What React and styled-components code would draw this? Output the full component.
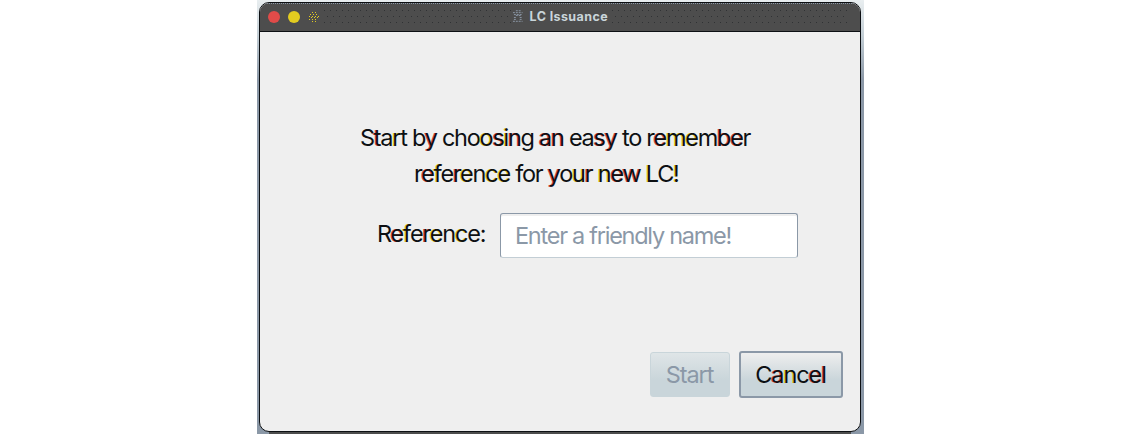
import React from "react";
import styled, { createGlobalStyle } from "styled-components";

const GlobalStyle = createGlobalStyle`
  * { box-sizing: border-box; }
  body {
    margin: 0;
    background: #fff;
    font-family: Inter, "Liberation Sans", sans-serif;
    overflow: hidden;
  }
`;

const Page = styled.main`
  display: flex;
  justify-content: center;
  height: 434px;
`;

const Desktop = styled.div`
  width: 607px;
  height: 434px;
  padding: 2px 3px 2px 2px;
  background: linear-gradient(#e9eef0 0, #c3ced5 36px, #8b98a7 80px, #8b98a7 100%);
`;

const Window = styled.section`
  display: flex;
  flex-direction: column;
  width: 602px;
  height: 430px;
  border: 1px solid #0d1013;
  border-radius: 10px;
  background: #efefef;
  box-shadow: 0 12px 0 -10px #4d4d4d;
  overflow: hidden;
`;

const TitleBar = styled.header`
  display: flex;
  align-items: center;
  height: 29px;
  padding: 0 7px 2px 8px;
  border-top: 1px dotted #8b98a7;
  border-bottom: 1px solid #0d1013;
  background: #4d4d4d;
`;

const Lights = styled.div`
  display: flex;
  gap: 8px;
  width: 56px;
`;

const Light = styled.span`
  width: 12px;
  height: 12px;
  border-radius: 50%;
  background: ${(p) => p.$fill};
`;

const Grain = styled.span`
  width: ${(p) => p.$width}px;
  height: 20px;
  background: conic-gradient(from 270deg at 1px 1px, #303234 90deg, transparent 0) 0 3px / 6px 12px,
    conic-gradient(from 270deg at 1px 1px, #303234 90deg, transparent 0) 3px 9px / 6px 12px;
`;

const Title = styled.h1`
  display: flex;
  align-items: center;
  gap: 6px;
  width: 96px;
  margin: 0 4px 0 0;
  padding-bottom: 1px;
  color: #c9d5da;
  font-size: 12.5px;
  font-weight: 700;
  line-height: 15px;
  letter-spacing: 0.4px;
  white-space: nowrap;
`;

const Content = styled.div`
  display: flex;
  flex: 1;
  flex-direction: column;
  padding: 88px 17px 34px 0;
`;

const Prompt = styled.p`
  display: flex;
  flex-direction: column;
  margin: 0;
  color: #0d1013;
  font-size: 23.5px;
  line-height: 36px;
  white-space: nowrap;
`;

const Line = styled.span`
  padding-left: ${(p) => p.$indent}px;
  letter-spacing: ${(p) => p.$spacing}px;
`;

const Fringe = styled.span`
  text-shadow: -1px 0 0 ${(p) => p.$tone};
`;

const Field = styled.div`
  display: flex;
  align-items: center;
  height: 45px;
  margin-top: 21px;
  padding-left: 117px;
`;

const Label = styled.label`
  width: 123px;
  padding-bottom: 4px;
  color: #0d1013;
  font-size: 23.5px;
  line-height: 30px;
  letter-spacing: -1.2px;
  white-space: nowrap;
`;

const Input = styled.input`
  width: 298px;
  height: 45px;
  padding: 0 14px;
  border: 1px solid #8b98a7;
  border-bottom-color: #c3ced5;
  border-radius: 3px;
  background: #fff;
  box-shadow: inset 0 2px 0 #efefef;
  font-family: inherit;
  font-size: 23.5px;
  letter-spacing: -1.26px;
  outline: none;
  &::placeholder { color: #8b98a7; opacity: 1; }
`;

const Actions = styled.footer`
  display: flex;
  align-items: flex-end;
  justify-content: flex-end;
  gap: 9px;
  margin-top: auto;
`;

const Button = styled.button`
  width: ${(p) => p.$width}px;
  height: ${(p) => (p.disabled ? 45 : 47)}px;
  margin-bottom: ${(p) => (p.disabled ? 0 : -1)}px;
  padding: 0 1px 1px 0;
  border: ${(p) => (p.disabled ? "1px solid #c9d5da" : "2px solid #8b98a7")};
  border-radius: 3px;
  background: linear-gradient(${(p) => (p.disabled ? "#dfe5e7" : "#eeeeee")} 0, #c9d5da 64%);
  color: ${(p) => (p.disabled ? "#8b98a7" : "#0d1013")};
  font-family: inherit;
  font-size: 23.5px;
  letter-spacing: ${(p) => p.$spacing}px;
`;

const tones = { "~": "#e04848", "^": "#e3d11c" };

// A "~" or "^" in the text gives the next letter a red or yellow edge.
function Fringed({ text }) {
  return text.split(/([~^].)/).map((part, i) =>
    tones[part[0]] ? (
      <Fringe key={i} $tone={tones[part[0]]}>{part[1]}</Fringe>
    ) : (
      part
    )
  );
}

function BankIcon() {
  return (
    <svg width="12" height="13" viewBox="0 0 12 13" fill="none" stroke="#8b98a7">
      <path d="M4 .5h5M1 2.5h10M2 4.5h8M4 5.5h6M2 7.5h2M8 7.5h2M2 9.5h2M8 9.5h2M1 11.5h10" strokeDasharray="2 1" />
    </svg>
  );
}

function SpeckledLight() {
  return (
    <svg width="12" height="12" viewBox="0 0 12 12" fill="none" stroke="#e3cc20">
      <path d="M4 1.5h5M2 3.5h9M1 5.5h10M3 6.5h7M1 8.5h9M4 10.5h5" strokeDasharray="1 2" />
    </svg>
  );
}

export default function App() {
  return (
    <>
      <GlobalStyle />
      <Page>
        <Desktop>
          <Window>
            <TitleBar>
              <Lights>
                <Light $fill="#e04b49" />
                <Light $fill="#e3cc20" />
                <SpeckledLight />
              </Lights>
              <Grain $width={188} />
              <Title>
                <BankIcon />
                LC Issuance
              </Title>
              <Grain $width={237} />
            </TitleBar>
            <Content>
              <Prompt>
                <Line $indent={100} $spacing={-1.27}>
                  <Fringed text="S~ta^rt b~y cho^o~s^i~ng ~a~n ea~s~y to r~e^m^em~b~er" />
                </Line>
                <Line $indent={154} $spacing={-1.25}>
                  <Fringed text="r~e^fe~r^en^c^e for ~yo^u~r ^n~e~w ^LC^!" />
                </Line>
              </Prompt>
              <Field>
                <Label htmlFor="reference">
                  <Fringed text="R~e^fe~r^en^ce:" />
                </Label>
                <Input id="reference" placeholder="Enter a friendly name!" />
              </Field>
              <Actions>
                <Button disabled $width={80} $spacing={-1.05}>Start</Button>
                <Button $width={104} $spacing={-1.1}>
                  <Fringed text="C~a^nc~e~l" />
                </Button>
              </Actions>
            </Content>
          </Window>
        </Desktop>
      </Page>
    </>
  );
}
